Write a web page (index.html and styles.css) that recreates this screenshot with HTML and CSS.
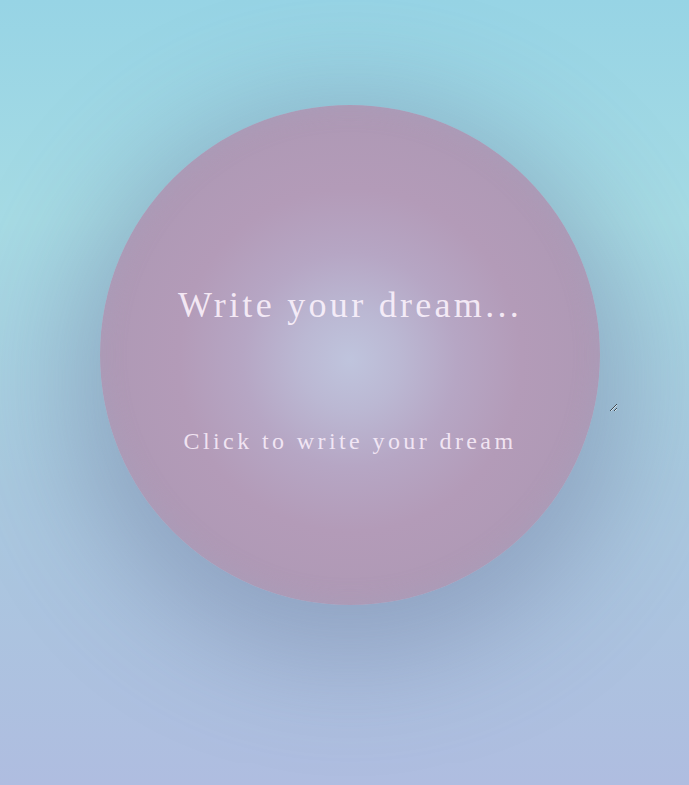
FILE: index.html
```html
<!DOCTYPE html>
<html lang="en">
<head>
<meta charset="utf-8">
<title>Dream</title>
<link rel="stylesheet" href="styles.css">
</head>
<body>
<main class="stage">
  <section class="orb">
    <textarea class="dream-input" placeholder="Write your dream..."></textarea>
    <p class="hint">Click to write your dream</p>
  </section>
</main>
</body>
</html>
```
FILE: styles.css
```css
html, body {
  margin: 0;
  padding: 0;
  height: 100%;
}
body {
  background: linear-gradient(180deg, #97d4e5 0%, #a6dbe4 28%, #a9c9df 62%, #afbde0 100%);
  font-family: "Liberation Serif", "DejaVu Serif", serif;
  overflow: hidden;
}
.stage {
  padding-top: 105px;
  padding-left: 100px;
}
.orb {
  width: 500px;
  height: 500px;
  box-sizing: border-box;
  border-radius: 50%;
  padding-top: 167px;
  display: flex;
  flex-direction: column;
  align-items: center;
  background: radial-gradient(circle at 50% 51%, #bfc4dd 0%, #bbb8d3 14%, #b6a6c4 30%, #b39bb8 48%, #ae99b5 70%, #a89db5 100%);
  box-shadow: inset 0 0 24px rgba(160, 165, 195, 0.35), 0 25px 110px 30px rgba(100, 108, 148, 0.38);
}
.dream-input {
  flex: none;
  width: 536px;
  height: 140px;
  box-sizing: border-box;
  padding: 9px 0 0;
  margin: 0;
  border: none;
  outline: none;
  background: transparent;
  font-family: "Liberation Serif", "DejaVu Serif", serif;
  font-size: 36px;
  line-height: 48px;
  letter-spacing: 3.3px;
  text-align: center;
  color: rgba(255, 248, 255, 0.88);
}
.dream-input::placeholder {
  color: rgba(255, 246, 255, 0.85);
}
.hint {
  margin: 14px 0 0;
  font-size: 24px;
  line-height: 30px;
  letter-spacing: 3.4px;
  color: rgba(255, 244, 255, 0.82);
}
```
